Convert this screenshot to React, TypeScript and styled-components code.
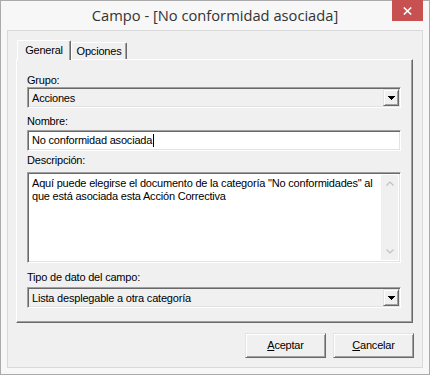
import React from 'react'
import styled, { createGlobalStyle, css } from 'styled-components'

const GlobalStyle = createGlobalStyle`
  html, body {
    margin: 0;
    padding: 0;
    background: #ffffff;
  }
  body {
    font-family: 'Liberation Sans', Arial, sans-serif;
    font-size: 11px;
    letter-spacing: -0.2px;
    color: #000000;
  }
`

const sunken = css`
  box-sizing: border-box;
  border: 1px solid;
  border-color: #a0a0a0 #ffffff #ffffff #a0a0a0;
  box-shadow: inset 1px 1px 0 #696969, inset -1px -1px 0 #e3e3e3;
`

const raised = css`
  box-sizing: border-box;
  border: 1px solid;
  border-color: #e3e3e3 #696969 #696969 #e3e3e3;
  box-shadow: inset 1px 1px 0 #ffffff, inset -1px -1px 0 #a0a0a0;
`

const Window = styled.div`
  width: 430px;
  height: 375px;
  box-sizing: border-box;
  border: 1px solid #aaaaaa;
  background: #f7f7f7;
  display: flex;
  flex-direction: column;
`

const TitleBar = styled.div`
  height: 29px;
  display: grid;
  grid-template-columns: 1fr auto 1fr;
  align-items: center;
`

const Title = styled.div`
  grid-column: 2;
  font-family: 'Open Sans', 'Noto Sans', sans-serif;
  font-size: 14.7px;
  letter-spacing: 0;
  color: #333333;
  white-space: nowrap;
  padding-bottom: 1px;
`

const CloseButton = styled.div`
  grid-column: 3;
  justify-self: end;
  align-self: start;
  margin-top: -1px;
  margin-right: 6px;
  width: 31px;
  height: 21px;
  background: #c75050;
  display: flex;
  align-items: center;
  justify-content: center;
`

const Client = styled.div`
  flex: 1;
  margin: 0 6px 6px;
  border: 1px solid #d9d9d9;
  background: #f0f0f0;
  padding: 9px 8px 9px 8px;
  display: flex;
  flex-direction: column;
`

const TabStrip = styled.div`
  height: 19px;
  display: flex;
  align-items: flex-end;
  padding-left: 1px;
`

const Tab = styled.div<{ $active?: boolean; $width: number }>`
  box-sizing: border-box;
  width: ${p => p.$width}px;
  height: ${p => (p.$active ? 20 : 17)}px;
  margin-bottom: ${p => (p.$active ? -1 : 0)}px;
  position: relative;
  z-index: ${p => (p.$active ? 1 : 0)};
  background: #f0f0f0;
  border-top: 1px solid #ffffff;
  border-left: 1px solid #ffffff;
  border-right: 1px solid #696969;
  box-shadow: inset -1px 0 0 #a0a0a0;
  border-radius: 2px 2px 0 0;
  padding-top: ${p => (p.$active ? 3 : 2)}px;
  line-height: 13px;
  text-align: center;
  white-space: nowrap;
`

const Panel = styled.div`
  box-sizing: border-box;
  width: 397px;
  height: 264px;
  border-top: 1px solid #ffffff;
  border-left: 1px solid #ffffff;
  border-right: 1px solid #696969;
  border-bottom: 1px solid #696969;
  box-shadow: inset -1px -1px 0 #a0a0a0;
  padding: 14px 11px 0 10px;
  display: flex;
  flex-direction: column;
`

const Label = styled.div<{ $top: number; $gap: number }>`
  line-height: 13px;
  margin-top: ${p => p.$top}px;
  margin-bottom: ${p => p.$gap}px;
`

const Combo = styled.div`
  ${sunken};
  height: 21px;
  background: #f0f0f0;
  display: flex;
  padding: 1px;
`

const ComboText = styled.div`
  flex: 1;
  line-height: 13px;
  padding: 3px 0 0 3px;
`

const ComboButton = styled.div`
  ${raised};
  width: 16px;
  height: 17px;
  background: #f0f0f0;
  display: flex;
  align-items: center;
  justify-content: center;
`

const TextInput = styled.div`
  ${sunken};
  height: 21px;
  background: #ffffff;
  padding: 3px 0 0 4px;
  line-height: 13px;
  display: flex;
  align-items: flex-start;
`

const Caret = styled.span`
  display: inline-block;
  width: 1px;
  height: 13px;
  background: #000000;
  margin-left: 1px;
`

const TextArea = styled.div`
  ${sunken};
  height: 91px;
  background: #ffffff;
  padding: 2px;
  display: flex;
`

const TextAreaBody = styled.div`
  flex: 1;
  padding: 2px 0 0 2px;
  line-height: 13px;
`

const ScrollBar = styled.div`
  width: 17px;
  background: #f0f0f0;
  display: flex;
  flex-direction: column;
  justify-content: space-between;
`

const ScrollArrow = styled.div`
  height: 17px;
  display: flex;
  align-items: center;
  justify-content: center;
`

const ButtonRow = styled.div`
  margin-top: 10px;
  display: flex;
  justify-content: flex-end;
  gap: 7px;
`

const DialogButton = styled.div`
  ${raised};
  width: 81px;
  height: 25px;
  background: #f0f0f0;
  line-height: 13px;
  display: flex;
  align-items: center;
  justify-content: center;
  padding-bottom: 1px;
`

const DownArrow = () => (
  <svg width="7" height="4" viewBox="0 0 7 4" shapeRendering="crispEdges">
    <polygon points="0,0 7,0 3.5,4" fill="#000000" />
  </svg>
)

const Chevron = ({ up }: { up?: boolean }) => (
  <svg width="8" height="5" viewBox="0 0 8 5">
    <polyline
      points={up ? '0.5,4.5 4,1 7.5,4.5' : '0.5,0.5 4,4 7.5,0.5'}
      fill="none"
      stroke="#c0c0c0"
      strokeWidth="1.2"
    />
  </svg>
)

const Dropdown = ({ value }: { value: string }) => (
  <Combo>
    <ComboText>{value}</ComboText>
    <ComboButton>
      <DownArrow />
    </ComboButton>
  </Combo>
)

const App = () => {
  return (
    <>
      <GlobalStyle />
      <Window>
        <TitleBar>
          <Title>Campo - [No conformidad asociada]</Title>
          <CloseButton>
            <svg width="9" height="8" viewBox="0 0 9 8">
              <path d="M0.8 0.5 L8.2 7.5 M8.2 0.5 L0.8 7.5" stroke="#ffffff" strokeWidth="1.6" />
            </svg>
          </CloseButton>
        </TitleBar>
        <Client>
          <TabStrip>
            <Tab $active $width={54}>General</Tab>
            <Tab $width={56}>Opciones</Tab>
          </TabStrip>
          <Panel>
            <Label $top={0} $gap={0}>Grupo:</Label>
            <Dropdown value="Acciones" />
            <Label $top={7} $gap={2}>Nombre:</Label>
            <TextInput>
              No conformidad asociada
              <Caret />
            </TextInput>
            <Label $top={3} $gap={5}>Descripción:</Label>
            <TextArea>
              <TextAreaBody>
                Aquí puede elegirse el documento de la categoría "No conformidades" al
                <br />
                que está asociada esta Acción Correctiva
              </TextAreaBody>
              <ScrollBar>
                <ScrollArrow>
                  <Chevron up />
                </ScrollArrow>
                <ScrollArrow>
                  <Chevron />
                </ScrollArrow>
              </ScrollBar>
            </TextArea>
            <Label $top={8} $gap={3}>Tipo de dato del campo:</Label>
            <Dropdown value="Lista desplegable a otra categoría" />
          </Panel>
          <ButtonRow>
            <DialogButton>
              <span>
                <u>A</u>ceptar
              </span>
            </DialogButton>
            <DialogButton>
              <span>
                <u>C</u>ancelar
              </span>
            </DialogButton>
          </ButtonRow>
        </Client>
      </Window>
    </>
  )
}

export default App
